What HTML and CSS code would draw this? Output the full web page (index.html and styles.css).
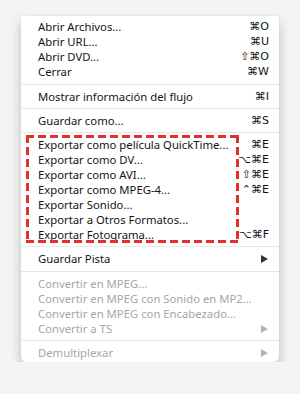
FILE: index.html
```html
<!DOCTYPE html>
<html lang="es">
<head>
  <meta charset="UTF-8">
  <title>Menú Archivo</title>
  <link rel="stylesheet" href="styles.css">
</head>
<body>

  <div class="menu">
    <div class="item"><span>Abrir Archivos...</span><span class="key">⌘O</span></div>
    <div class="item"><span>Abrir URL...</span><span class="key">⌘U</span></div>
    <div class="item"><span>Abrir DVD...</span><span class="key">⇧⌘O</span></div>
    <div class="item"><span>Cerrar</span><span class="key">⌘W</span></div>
    <div class="sep wide"></div>
    <div class="item"><span>Mostrar información del flujo</span><span class="key">⌘I</span></div>
    <div class="sep"></div>
    <div class="item"><span>Guardar como...</span><span class="key">⌘S</span></div>
    <div class="sep"></div>
    <div class="item"><span>Exportar como película QuickTime...</span><span class="key">⌘E</span></div>
    <div class="item"><span>Exportar como DV...</span><span class="key">⌥⌘E</span></div>
    <div class="item"><span>Exportar como AVI...</span><span class="key">⇧⌘E</span></div>
    <div class="item"><span>Exportar como MPEG-4...</span><span class="key">⌃⌘E</span></div>
    <div class="item"><span>Exportar Sonido...</span></div>
    <div class="item"><span>Exportar a Otros Formatos...</span></div>
    <div class="item"><span>Exportar Fotograma...</span><span class="key">⌥⌘F</span></div>
    <div class="sep"></div>
    <div class="item"><span>Guardar Pista</span><span class="arrow"></span></div>
    <div class="sep wide"></div>
    <div class="item off"><span>Convertir en MPEG...</span></div>
    <div class="item off"><span>Convertir en MPEG con Sonido en MP2...</span></div>
    <div class="item off"><span>Convertir en MPEG con Encabezado...</span></div>
    <div class="item off"><span>Convertir a TS</span><span class="arrow"></span></div>
    <div class="sep"></div>
    <div class="item off"><span>Demultiplexar</span><span class="arrow"></span></div>

    <!-- highlight round the export items -->
    <div class="mark"></div>
  </div>

</body>
</html>
```

FILE: styles.css
```css
body {
  margin: 0;
  background-color: #f4f4f4;
  font-family: 'Noto Sans', 'DejaVu Sans', sans-serif;
  font-size: 11.3px;
  color: #141414;
}
.menu {
  position: relative;
  width: 258px;
  margin: 16px 0 0 21px;
  padding: 3px 0 2px;
  background-color: #fff;
  border-radius: 0 0 5px 5px;
  box-shadow: 0 0 1px rgba(0, 0, 0, 0.2), 0 6px 12px rgba(0, 0, 0, 0.22);
}
.item {
  display: flex;
  justify-content: space-between;
  align-items: center;
  height: 15px;
  padding: 0 10px 0 17px;
  white-space: nowrap;
}
.item.off {
  color: #a6a6a6;
}
.key {
  font-family: 'DejaVu Sans', sans-serif;
  font-size: 11px;
}
.arrow {
  width: 0;
  height: 0;
  margin-right: 1px;
  border-top: 4px solid transparent;
  border-bottom: 4px solid transparent;
  border-left: 7px solid #333;
}
.off .arrow {
  border-left-color: #b3b3b3;
}
.sep {
  height: 1px;
  margin: 4px 0;
  background-color: #e6e6e6;
}
.sep.wide {
  margin-top: 5px;
}
.mark {
  position: absolute;
  left: 5px;
  top: 119px;
  width: 213px;
  height: 108px;
  background:
    repeating-linear-gradient(90deg, #e2302a 0 8px, transparent 8px 12px) top left / 100% 3px no-repeat,
    repeating-linear-gradient(90deg, #e2302a 0 8px, transparent 8px 12px) bottom left / 100% 3px no-repeat,
    repeating-linear-gradient(180deg, #e2302a 0 8px, transparent 8px 12px) top left / 3px 100% no-repeat,
    repeating-linear-gradient(180deg, #e2302a 0 8px, transparent 8px 12px) top right / 3px 100% no-repeat;
}
```
